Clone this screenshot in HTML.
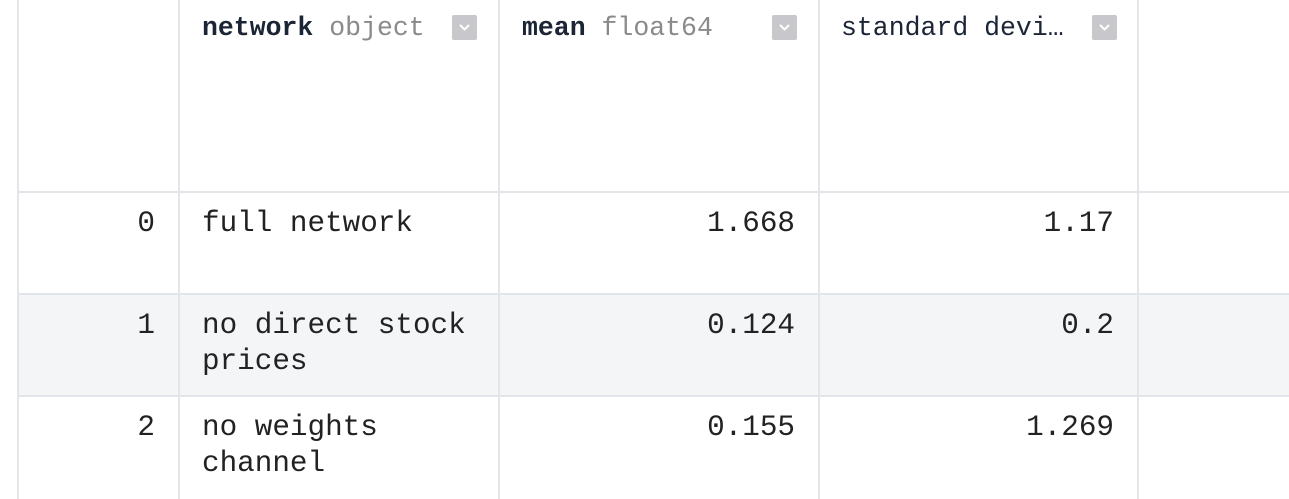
<!DOCTYPE html>
<html><head><style>
body{margin:0;width:1289px;height:499px;background:#fff;position:relative;overflow:hidden;font-family:"Liberation Mono",monospace;}
.v{position:absolute;top:0;width:2px;height:499px;background:#e2e5ea}
.h{position:absolute;left:18px;width:1271px;height:2px;background:#e2e5ea}
.t{position:absolute;white-space:nowrap}
.hd{font-size:26.5px;color:#1b2535;top:13px;line-height:30px}
.hd b{font-weight:bold}
.hd span{color:#8a8a8a}
.ic{position:absolute;top:15px;width:25px;height:25px;background:#c8c8cc;border-radius:2px}
.ic svg{position:absolute;left:6px;top:8px}
.d{font-size:29.3px;color:#222;line-height:36px}
.r{text-align:right}
</style></head><body>
<div style="position:absolute;left:18px;top:294px;width:1271px;height:101px;background:#f4f5f7"></div>
<div class="v" style="left:17px"></div>
<div class="v" style="left:178px"></div>
<div class="v" style="left:498px"></div>
<div class="v" style="left:818px"></div>
<div class="v" style="left:1137px"></div>
<div class="h" style="top:191px"></div>
<div class="h" style="top:293px"></div>
<div class="h" style="top:395px"></div>

<div class="t hd" style="left:202px"><b>network</b> <span>object</span></div>
<div class="ic" style="left:452px"><svg width="13" height="10"><path d="M2 2l4.5 4.5 4.5-4.5" stroke="#fff" stroke-width="2" fill="none"/></svg></div>
<div class="t hd" style="left:522px"><b>mean</b> <span>float64</span></div>
<div class="ic" style="left:772px"><svg width="13" height="10"><path d="M2 2l4.5 4.5 4.5-4.5" stroke="#fff" stroke-width="2" fill="none"/></svg></div>
<div class="t hd" style="left:841px">standard devi…</div>
<div class="ic" style="left:1092px"><svg width="13" height="10"><path d="M2 2l4.5 4.5 4.5-4.5" stroke="#fff" stroke-width="2" fill="none"/></svg></div>

<div class="t d r" style="right:1134px;top:206px">0</div>
<div class="t d" style="left:202px;top:206px">full network</div>
<div class="t d r" style="right:494px;top:206px">1.668</div>
<div class="t d r" style="right:175px;top:206px">1.17</div>

<div class="t d r" style="right:1134px;top:308px">1</div>
<div class="t d" style="left:202px;top:308px">no direct stock<br>prices</div>
<div class="t d r" style="right:494px;top:308px">0.124</div>
<div class="t d r" style="right:175px;top:308px">0.2</div>

<div class="t d r" style="right:1134px;top:410px">2</div>
<div class="t d" style="left:202px;top:410px">no weights<br>channel</div>
<div class="t d r" style="right:494px;top:410px">0.155</div>
<div class="t d r" style="right:175px;top:410px">1.269</div>
</body></html>
